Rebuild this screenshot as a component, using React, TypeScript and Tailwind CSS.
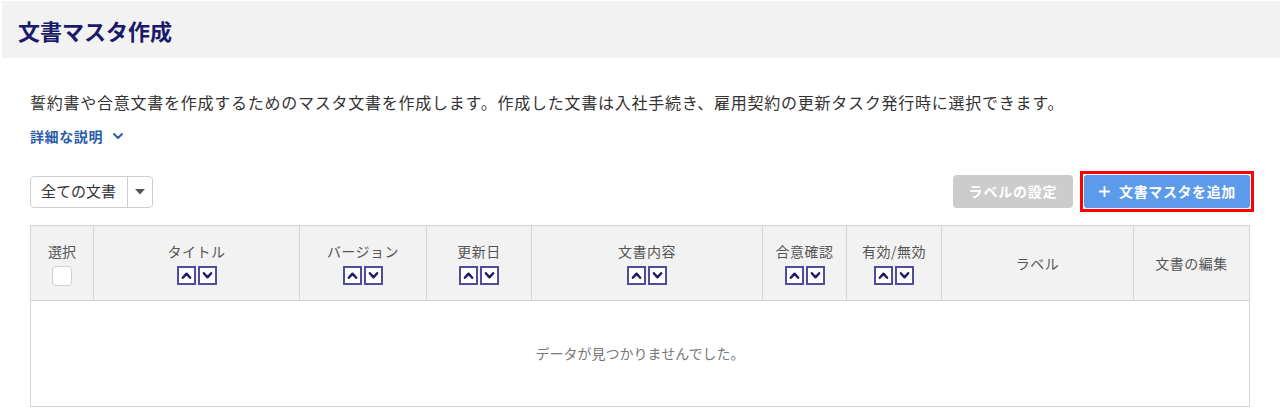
import React from 'react';

const SortButtons: React.FC = () => (
  <div className="flex justify-center gap-[2px] mt-[5px]">
    <button className="w-[19px] h-[19px] border-2 border-[#4d4d9c] bg-white flex items-center justify-center">
      <svg width="11" height="11" viewBox="0 0 12 12" fill="none">
        <path d="M2 8.5 L6 4 L10 8.5" stroke="#1c1c6b" strokeWidth="2.6" strokeLinecap="round" strokeLinejoin="round" />
      </svg>
    </button>
    <button className="w-[19px] h-[19px] border-2 border-[#4d4d9c] bg-white flex items-center justify-center">
      <svg width="11" height="11" viewBox="0 0 12 12" fill="none">
        <path d="M2 3.5 L6 8 L10 3.5" stroke="#1c1c6b" strokeWidth="2.6" strokeLinecap="round" strokeLinejoin="round" />
      </svg>
    </button>
  </div>
);

interface Column {
  label: string;
  width: string;
  sortable: boolean;
}

const columns: Column[] = [
  { label: 'タイトル', width: 'w-[206px]', sortable: true },
  { label: 'バージョン', width: 'w-[127px]', sortable: true },
  { label: '更新日', width: 'w-[105px]', sortable: true },
  { label: '文書内容', width: 'w-[231px]', sortable: true },
  { label: '合意確認', width: 'w-[84px]', sortable: true },
  { label: '有効/無効', width: 'w-[95px]', sortable: true },
  { label: 'ラベル', width: 'w-[192px]', sortable: false },
  { label: '文書の編集', width: 'w-[116px]', sortable: false },
];

const App: React.FC = () => {
  return (
    <div className="w-[1280px] h-[414px] bg-white font-['Noto_Sans_CJK_JP','Noto_Sans',sans-serif] overflow-hidden">
      <header className="ml-[2px] mt-[1px] h-[57px] bg-[#f2f2f2] flex items-center px-[16px]">
        <h1 className="text-[22px] leading-none font-bold text-[#1a1a6b]">文書マスタ作成</h1>
      </header>

      <main className="px-[30px] pr-[31px]">
        <p className="mt-[34px] text-[16px] tracking-[0.75px] leading-[20px] text-[#333]">
          誓約書や合意文書を作成するためのマスタ文書を作成します。作成した文書は入社手続き、雇用契約の更新タスク発行時に選択できます。
        </p>

        <button className="mt-[14px] flex items-center gap-[9px] text-[14px] tracking-[0.6px] leading-[20px] font-bold text-[#2a5caa]">
          詳細な説明
          <svg width="12" height="12" viewBox="0 0 12 12" fill="none">
            <path d="M2 4 L6 8 L10 4" stroke="#2a5caa" strokeWidth="2" strokeLinecap="round" strokeLinejoin="round" />
          </svg>
        </button>

        <div className="mt-[29px] flex items-center justify-between">
          <div className="flex h-[32px] w-[123px] border border-[#cfcfcf] rounded-[4px] bg-white">
            <span className="flex items-center pl-[10px] w-[97px] border-r border-[#cfcfcf] text-[15px] text-[#333]">
              全ての文書
            </span>
            <span className="flex flex-1 items-center justify-center">
              <svg width="10" height="6" viewBox="0 0 10 6">
                <path d="M0 0 L10 0 L5 5.5 Z" fill="#555" />
              </svg>
            </span>
          </div>

          <div className="flex items-center gap-[11px] -mr-[1px]">
            <button className="h-[33px] w-[120px] rounded-[4px] bg-[#cccccc] text-white text-[14px] tracking-[0.8px] font-bold">
              ラベルの設定
            </button>
            <div className="-m-[4px] border-[3px] border-[#ff0000] p-[1px]">
              <button className="h-[33px] w-[166px] rounded-[3px] bg-[#5b9be9] text-white text-[14px] tracking-[0.6px] font-bold flex items-center justify-center gap-[8px]">
                <svg width="13" height="13" viewBox="0 0 13 13">
                  <path d="M6.5 1 V12 M1 6.5 H12" stroke="white" strokeWidth="1.8" />
                </svg>
                文書マスタを追加
              </button>
            </div>
          </div>
        </div>

        <table className="mt-[17px] w-[1219px] table-fixed border-collapse border border-[#d4d4d4]">
          <thead>
            <tr className="h-[75px] bg-[#f2f2f2]">
              <th className="w-[63px] border border-[#d4d4d4] font-normal align-middle">
                <div className="text-[14px] leading-[20px] text-[#555]">選択</div>
                <div className="flex justify-center mt-[5px]">
                  <span className="w-[20px] h-[20px] rounded-[4px] border border-[#cfcfcf] bg-white" />
                </div>
              </th>
              {columns.map((col) => (
                <th key={col.label} className={`${col.width} border border-[#d4d4d4] font-normal align-middle`}>
                  <div className="text-[14px] tracking-[0.5px] leading-[20px] text-[#555]">{col.label}</div>
                  {col.sortable && <SortButtons />}
                </th>
              ))}
            </tr>
          </thead>
          <tbody>
            <tr className="h-[106px]">
              <td colSpan={9} className="text-center align-middle text-[14px] text-[#777]">
                データが見つかりませんでした。
              </td>
            </tr>
          </tbody>
        </table>
      </main>
    </div>
  );
};

export default App;
